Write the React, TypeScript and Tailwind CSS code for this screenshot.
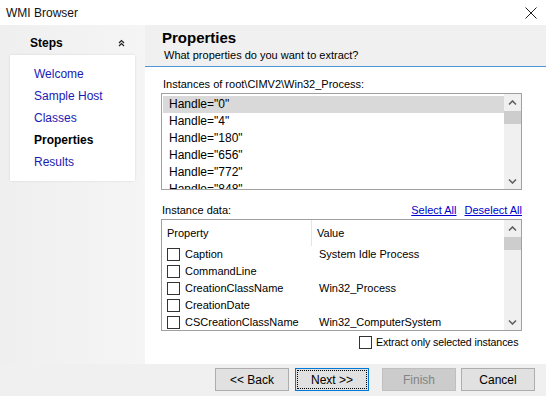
import React from "react";

const handles = ['Handle="0"', 'Handle="4"', 'Handle="180"', 'Handle="656"', 'Handle="772"', 'Handle="848"'];

const props = [
  { name: "Caption", value: "System Idle Process" },
  { name: "CommandLine", value: "" },
  { name: "CreationClassName", value: "Win32_Process" },
  { name: "CreationDate", value: "" },
  { name: "CSCreationClassName", value: "Win32_ComputerSystem" },
];

const steps = ["Welcome", "Sample Host", "Classes", "Properties", "Results"];

function Chevron({ down }: { down?: boolean }) {
  return (
    <svg width="9" height="6" viewBox="0 0 9 6" className="block">
      <path
        d={down ? "M1 1.5 L4.5 5 L8 1.5" : "M1 4.5 L4.5 1 L8 4.5"}
        fill="none"
        stroke="#606060"
        strokeWidth="1.6"
      />
    </svg>
  );
}

function ScrollBar() {
  return (
    <div className="w-[17px] h-full bg-[#f0f0f0] flex flex-col items-center">
      <div className="h-[17px] w-full flex items-center justify-center">
        <Chevron />
      </div>
      <div className="w-full h-[13px] bg-[#cdcdcd]" />
      <div className="flex-1" />
      <div className="h-[17px] w-full flex items-center justify-center">
        <Chevron down />
      </div>
    </div>
  );
}

function Box() {
  return <div className="w-[13px] h-[13px] border border-[#333333] bg-white shrink-0" />;
}

export default function App() {
  return (
    <div className="w-[546px] h-[396px] bg-white flex flex-col overflow-hidden font-['Liberation_Sans',Arial,sans-serif] text-[11px] text-black">
      {/* Title bar */}
      <div className="h-[25px] flex items-center justify-between pl-[6px] pr-[9px] shrink-0">
        <span className="text-[12px] text-[#111]">WMI Browser</span>
        <svg width="12" height="12" viewBox="0 0 12 12">
          <path d="M0.5 0.5 L11.5 11.5 M11.5 0.5 L0.5 11.5" stroke="#222" strokeWidth="1" />
        </svg>
      </div>

      <div className="flex h-[339px] shrink-0">
        {/* Steps panel */}
        <div className="w-[145px] bg-gradient-to-r from-[#efefef] to-[#f5f5f5] flex flex-col">
          <div className="h-[30px] pt-[5px] flex items-center justify-between pl-[30px] pr-[20px]">
            <span className="text-[12px] font-bold">Steps</span>
            <svg width="7" height="8" viewBox="0 0 7 8">
              <path d="M1 4 L3.5 1.5 L6 4 M1 7 L3.5 4.5 L6 7" fill="none" stroke="#222" strokeWidth="1.2" />
            </svg>
          </div>
          <div className="ml-[10px] w-[125px] h-[126px] bg-white shadow-[0_0_2px_rgba(0,0,0,0.12)] pt-[8px] pl-[24px] flex flex-col">
            {steps.map((s) => (
              <div
                key={s}
                className={`h-[22px] flex items-center text-[12px] ${s === "Properties" ? "font-bold text-black" : "text-[#1a1ab4]"}`}
              >
                {s}
              </div>
            ))}
          </div>
        </div>

        {/* Content */}
        <div className="flex-1 flex flex-col bg-white">
          <div className="h-[42px] bg-[#f0f0f0] border-b border-[#4d96d6] pl-[17px] pt-[4px] flex flex-col shrink-0">
            <span className="text-[15px] font-bold leading-[18px]">Properties</span>
            <span className="text-[11px] leading-[14px] mt-[1px] pl-[2px]">What properties do you want to extract?</span>
          </div>

          <div className="pl-[16px] pr-[24px] flex flex-col">
            <div className="mt-[10px] h-[14px] leading-[14px] pl-[2px]">Instances of root\CIMV2\Win32_Process:</div>
            <div className="mt-[2px] h-[97px] border border-[#a0a0a0] flex overflow-hidden">
              <div className="flex-1 pt-[2px] pl-[1px] overflow-hidden">
                {handles.map((h, i) => (
                  <div
                    key={h}
                    className={`h-[17px] leading-[17px] pl-[6px] text-[12px] ${i === 0 ? "bg-[#d9d9d9]" : ""}`}
                  >
                    {h}
                  </div>
                ))}
              </div>
              <ScrollBar />
            </div>

            <div className="mt-[13px] h-[14px] flex items-center justify-between pl-[1px]">
              <span className="text-[11px]">Instance data:</span>
              <div className="flex gap-[8px] text-[#0000cc] underline text-[11px]">
                <span>Select All</span>
                <span>Deselect All</span>
              </div>
            </div>

            <div className="mt-[2px] h-[112px] border border-[#a0a0a0] flex overflow-hidden">
              <div className="flex-1 flex flex-col overflow-hidden">
                <div className="h-[26px] flex shrink-0">
                  <div className="w-[150px] border-r border-[#e5e5e5] pl-[5px] flex items-center">Property</div>
                  <div className="pl-[5px] flex items-center">Value</div>
                </div>
                {props.map((p) => (
                  <div key={p.name} className="h-[17px] flex items-center shrink-0">
                    <div className="w-[151px] flex items-center pl-[5px]">
                      <Box />
                      <span className="ml-[5px]">{p.name}</span>
                    </div>
                    <span className="pl-[6px]">{p.value}</span>
                  </div>
                ))}
              </div>
              <ScrollBar />
            </div>

            <div className="mt-[4px] flex items-center justify-end whitespace-nowrap">
              <div className="flex items-center w-[163px]">
                <Box />
                <span className="ml-[4px] text-[10.6px] tracking-[-0.1px]">Extract only selected instances</span>
              </div>
            </div>
          </div>
        </div>
      </div>

      {/* Buttons */}
      <div className="flex-1 bg-[#f0f0f0] flex items-start pt-[4px] pl-[215px]">
        <button className="w-[74px] h-[23px] bg-[#e1e1e1] border border-[#adadad] text-[12px]">&lt;&lt; Back</button>
        <button className="ml-[6px] w-[74px] h-[23px] bg-[#e1e1e1] border border-[#0078d7] text-[12px] p-[1px]">
          <div className="w-full h-full border border-dotted border-black flex items-center justify-center">Next &gt;&gt;</div>
        </button>
        <button className="ml-[13px] w-[74px] h-[23px] bg-[#cccccc] border border-[#bfbfbf] text-[12px] text-[#838383]">Finish</button>
        <button className="ml-[5px] w-[74px] h-[23px] bg-[#e1e1e1] border border-[#adadad] text-[12px]">Cancel</button>
      </div>
    </div>
  );
}
